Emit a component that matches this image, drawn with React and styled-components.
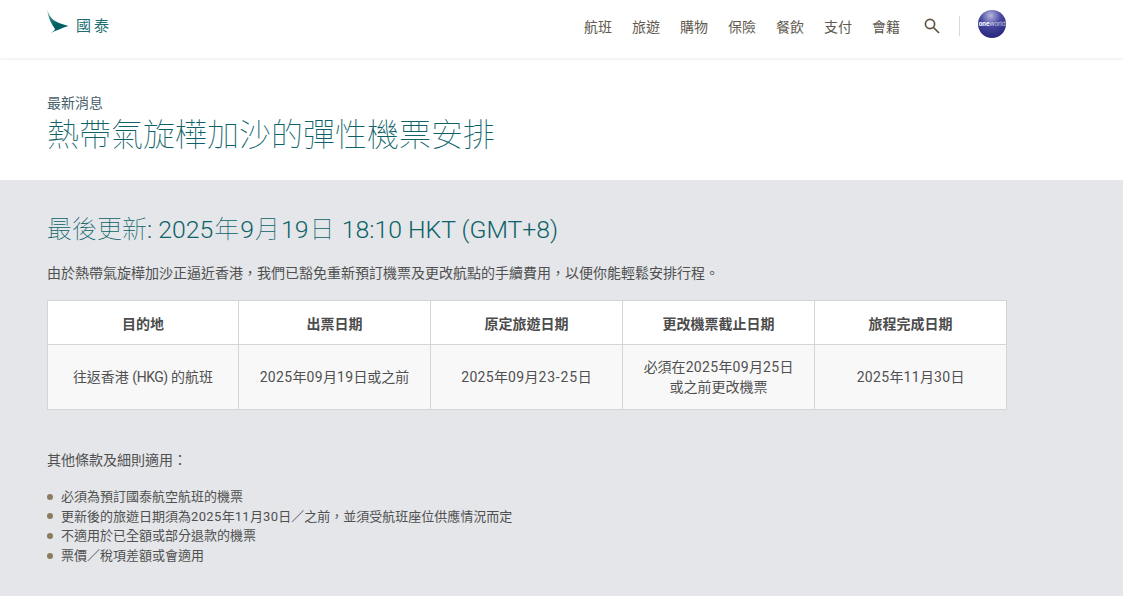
import React from 'react';
import styled, { createGlobalStyle } from 'styled-components';

const Global = createGlobalStyle`
  html, body { margin: 0; padding: 0; background: #fff; }
  body { font-family: Roboto, "Noto Sans CJK TC", sans-serif; color: #505050; font-size: 14px; }
`;
const Header = styled.header`
  height: 58px; background: #fff; box-shadow: 0 1px 3px rgba(0,0,0,.08);
  position: relative; display: flex; align-items: flex-start; justify-content: space-between;
  width: 100%; padding: 0 117px 0 47px; box-sizing: border-box;
`;
const Brand = styled.div`display: flex; align-items: flex-start; padding-top: 9px;`;
const BrandText = styled.span`
  font-size: 15px; font-weight: 400; color: #1b6e70; letter-spacing: 3px; margin: 9px 0 0 6px; line-height: 17px;
`;
const Nav = styled.nav`display: flex; align-items: center; height: 54px;`;
const NavItem = styled.a`
  font-size: 14px; color: #5f5a50; margin-right: 20px; line-height: 20px;
`;
const SearchWrap = styled.span`display: flex; margin: -3px 0 0 4px;`;
const Divider = styled.span`width: 1px; height: 20px; background: #d8d8d8; margin: -2px 18px 0 19px;`;
const Globe = styled.span`display: flex; margin-top: -6px;`;
const Intro = styled.section`padding: 35px 47px 0; height: 122px; box-sizing: border-box;`;
const Kicker = styled.div`font-size: 14px; line-height: 20px; color: #46606a;`;
const Title = styled.h1`
  margin: 2px 0 0; font-weight: 100; font-size: 32px; line-height: 40px; color: #0c6268;
`;
const Main = styled.main`background: #e4e6e9; padding: 32px 47px 32px; height: 416px; box-sizing: border-box;`;
const Updated = styled.h2`
  margin: 0; font-weight: 300; font-size: 24.8px; line-height: 36px; color: #0c6268;
`;
const Cjk = styled.span`font-size: 25px; font-weight: 100; margin: 0 ${(p) => p.$gap || 0}px;`;
const Lead = styled.p`margin: 15px 0 0; font-size: 14px; line-height: 20px;`;
const Table = styled.table`
  border-collapse: collapse; width: 960px; table-layout: fixed; margin-top: 17px; font-size: 14px;
`;
const Th = styled.th`
  background: #fff; border: 1px solid #d2d4d6; height: 44px; padding: 0 16px; font-weight: 700; color: #4c4c4c; box-sizing: border-box;
  &:first-child { width: 191px; }
`;
const Td = styled.td`
  background: #f8f8f8; border: 1px solid #d2d4d6; height: 65px; padding: 0 16px; text-align: center; line-height: 20px; box-sizing: border-box;
`;
const Num = styled.span`letter-spacing: ${(p) => p.$ls ?? 0.35}px;`;
const Terms = styled.p`margin: 40px 0 0; line-height: 20px;`;
const Bullets = styled.ul`list-style: none; margin: 17px 0 0; padding: 0;`;
const Bullet = styled.li`
  display: flex; align-items: center; line-height: 19.6px; font-size: 13px;
  &::before { content: ''; width: 6px; height: 6px; border-radius: 50%; background: #8c7b5d; margin-right: 8px; flex: none; }
`;

const Logo = () => (
  <svg width="23" height="25" viewBox="0 0 23 25">
    <defs>
      <linearGradient id="wing" x1="0" y1="0" x2="0.3" y2="0.7">
        <stop offset="0" stopColor="#a0c6c6" />
        <stop offset="0.5" stopColor="#2f8082" />
        <stop offset="1" stopColor="#005f62" />
      </linearGradient>
    </defs>
    <path d="M0.3 0C1.2 5 4 10 9 12.5C13 14.5 17 15.8 21.5 17C15 19 9 21.5 3 24.5C6 22.8 8 21.3 8 20C5.3 16 0.8 9 0.3 0Z" fill="url(#wing)" />
  </svg>
);
const SearchIcon = () => (
  <svg width="16" height="16" viewBox="0 0 16 16" fill="none" strokeWidth="1.7">
    <circle cx="6" cy="6" r="4.6" stroke="#5f5244" />
    <path d="M9.5 9.5L15 15" stroke="#5f5244" />
  </svg>
);
const GlobeIcon = () => (
  <svg width="28" height="28" viewBox="0 0 28 28">
    <defs>
      <radialGradient id="orb" cx="0.45" cy="0.2" r="0.8">
        <stop offset="0" stopColor="#b5b8dc" />
        <stop offset="0.45" stopColor="#4a4aa2" />
        <stop offset="1" stopColor="#26267c" />
      </radialGradient>
    </defs>
    <circle cx="14" cy="14" r="14" fill="url(#orb)" />
    <text x="14" y="16" textAnchor="middle" fontFamily="Roboto, sans-serif" fontSize="6.5" fill="#fff">
      <tspan fontWeight="700">one</tspan><tspan fontWeight="300">world</tspan>
    </text>
  </svg>
);

const nav = ['航班', '旅遊', '購物', '保險', '餐飲', '支付', '會籍'];
const heads = ['目的地', '出票日期', '原定旅遊日期', '更改機票截止日期', '旅程完成日期'];

export default function App() {
  return (
    <>
      <Global />
      <Header>
        <Brand><Logo /><BrandText>國泰</BrandText></Brand>
        <Nav>
          {nav.map((n) => <NavItem key={n}>{n}</NavItem>)}
          <SearchWrap><SearchIcon /></SearchWrap>
          <Divider />
          <Globe><GlobeIcon /></Globe>
        </Nav>
      </Header>
      <Intro>
        <Kicker>最新消息</Kicker>
        <Title>熱帶氣旋樺加沙的彈性機票安排</Title>
      </Intro>
      <Main>
        <Updated><Cjk>最後更新</Cjk>: 2025<Cjk $gap={1}>年</Cjk>9<Cjk $gap={1}>月</Cjk>19<Cjk $gap={1}>日</Cjk> 18:10 HKT (GMT+8)</Updated>
        <Lead>由於熱帶氣旋樺加沙正逼近香港，我們已豁免重新預訂機票及更改航點的手續費用，以便你能輕鬆安排行程。</Lead>
        <Table>
          <thead><tr>{heads.map((h) => <Th key={h}>{h}</Th>)}</tr></thead>
          <tbody>
            <tr>
              <Td>往返香港 <Num $ls={-0.5}>(HKG)</Num> 的航班</Td>
              <Td><Num>2025</Num>年<Num>09</Num>月<Num>19</Num>日或之前</Td>
              <Td><Num>2025</Num>年<Num>09</Num>月<Num $ls={0.8}>23-25</Num>日</Td>
              <Td>必須在<Num>2025</Num>年<Num>09</Num>月<Num>25</Num>日<br />或之前更改機票</Td>
              <Td><Num>2025</Num>年<Num>11</Num>月<Num>30</Num>日</Td>
            </tr>
          </tbody>
        </Table>
        <Terms>其他條款及細則適用：</Terms>
        <Bullets>
          <Bullet><span>必須為預訂國泰航空航班的機票</span></Bullet>
          <Bullet><span>更新後的旅遊日期須為<Num>2025</Num>年<Num>11</Num>月<Num>30</Num>日／之前，並須受航班座位供應情況而定</span></Bullet>
          <Bullet><span>不適用於已全額或部分退款的機票</span></Bullet>
          <Bullet><span>票價／稅項差額或會適用</span></Bullet>
        </Bullets>
      </Main>
    </>
  );
}
